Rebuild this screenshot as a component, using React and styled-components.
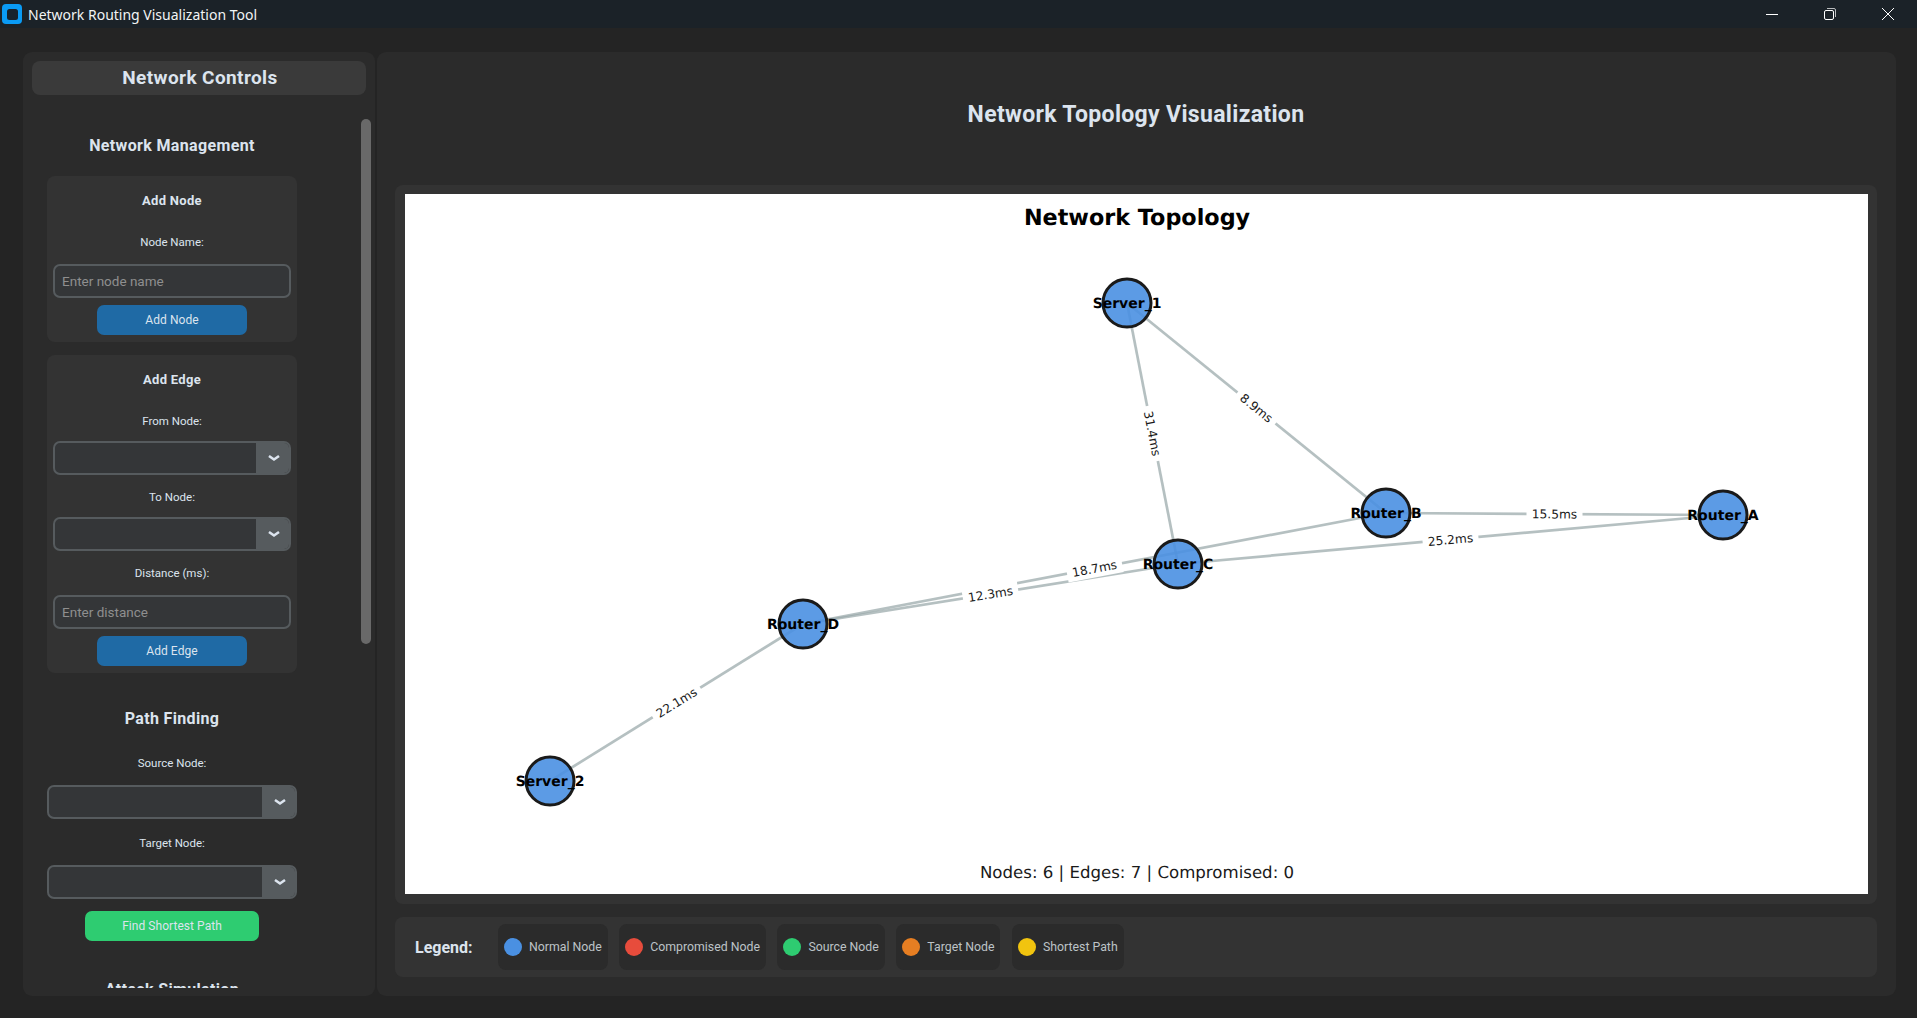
import React from 'react'
import styled, { createGlobalStyle } from 'styled-components'

const GlobalStyle = createGlobalStyle`
  html, body { margin: 0; padding: 0; background: #242424; }
  * { box-sizing: border-box; }
`

const Window = styled.div`
  width: 1917px;
  height: 1018px;
  display: flex;
  flex-direction: column;
  background: #242424;
  overflow: hidden;
  font-family: Roboto, "Liberation Sans", sans-serif;
`
const TitleBar = styled.div`
  height: 28px;
  flex: none;
  display: flex;
  align-items: center;
  background: #1b2228;
  color: #f2f4f5;
  font-family: "Noto Sans", sans-serif;
  font-size: 14px;
  padding-left: 2px;
`
const AppTitle = styled.span`
  margin-left: 6px;
`
const WindowButtons = styled.div`
  margin-left: auto;
  display: flex;
  align-items: center;
  gap: 46px;
  padding-right: 23px;
  svg { display: block; }
`
const Main = styled.div`
  flex: 1;
  min-height: 0;
  display: flex;
  gap: 2px;
  padding: 24px 21px 22px 23px;
`
const SidePanel = styled.aside`
  width: 352px;
  flex: none;
  display: flex;
  flex-direction: column;
  padding: 9px 9px 8px;
  background: #2b2b2b;
  border-radius: 9px;
`
const PanelHeader = styled.div`
  height: 34px;
  flex: none;
  display: flex;
  align-items: center;
  justify-content: center;
  padding: 0 0 2px 2px;
  background: #3a3a3a;
  border-radius: 8px;
  color: #dce4ee;
  font-size: 19px;
  font-weight: 700;
  letter-spacing: 0.4px;
`
const ScrollBody = styled.div`
  flex: 1;
  min-height: 0;
  display: flex;
  align-items: flex-start;
  margin-right: -5px;
  padding-left: 15px;
  overflow: hidden;
`
const ScrollContent = styled.div`
  width: 250px;
  flex: none;
  display: flex;
  flex-direction: column;
  padding-top: 39px;
`
const ScrollThumb = styled.div`
  width: 10px;
  height: 525px;
  margin-top: 24px;
  margin-left: auto;
  flex: none;
  background: #696969;
  border-radius: 5px;
`
const SectionTitle = styled.h2`
  margin: ${p => p.$top || 0}px 0 0;
  height: 24px;
  flex: none;
  line-height: 24px;
  text-align: center;
  color: #dce4ee;
  font-size: 16px;
  font-weight: 700;
  letter-spacing: 0.35px;
`
const Card = styled.div`
  margin-top: ${p => p.$top}px;
  display: flex;
  flex-direction: column;
  padding: 14px 6px 7px;
  background: #333333;
  border-radius: 8px;
`
const CardTitle = styled.h3`
  margin: 0;
  height: 21px;
  line-height: 22px;
  text-align: center;
  color: #dce4ee;
  font-size: 13px;
  font-weight: 700;
  letter-spacing: 0.3px;
`
const Label = styled.label`
  display: block;
  margin-top: ${p => p.$top ?? 14}px;
  margin-bottom: 12px;
  height: 16px;
  line-height: 16px;
  text-align: center;
  color: #dce4ee;
  font-size: 11.5px;
`
const TextInput = styled.input`
  display: block;
  width: 100%;
  height: 34px;
  margin-top: 2px;
  padding: 0 7px;
  background: #343638;
  border: 2px solid #565b5e;
  border-radius: 7px;
  color: #dce4ee;
  font-family: inherit;
  font-size: 13.5px;
  outline: none;
  &::placeholder { color: #8f8f8f; opacity: 1; }
`
const Select = styled.div`
  height: 34px;
  flex: none;
  margin-top: ${p => p.$top || 0}px;
  display: flex;
  background: #343638;
  border: 2px solid #565b5e;
  border-radius: 7px;
  overflow: hidden;
`
const SelectArrow = styled.div`
  width: 35px;
  margin-left: auto;
  margin-right: -2px;
  flex: none;
  display: flex;
  align-items: center;
  justify-content: center;
  background: #565b5e;
`
const ActionButton = styled.button`
  display: block;
  align-self: center;
  flex: none;
  width: ${p => p.$width}px;
  height: 30px;
  margin-top: ${p => p.$top}px;
  padding: 0;
  border: none;
  border-radius: 7px;
  background: ${p => p.$color};
  color: #dce4ee;
  font-family: inherit;
  font-size: 12px;
  letter-spacing: 0.05px;
`
const ContentPanel = styled.main`
  flex: 1;
  min-width: 0;
  display: flex;
  flex-direction: column;
  padding: 0 19px 19px 18px;
  background: #2b2b2b;
  border-radius: 9px;
`
const ContentTitle = styled.h1`
  height: 133px;
  flex: none;
  margin: 0;
  padding-bottom: 9px;
  display: flex;
  align-items: center;
  justify-content: center;
  color: #dce4ee;
  font-size: 23px;
  font-weight: 700;
  letter-spacing: 0.33px;
`
const ChartFrame = styled.section`
  height: 719px;
  flex: none;
  padding: 9px 9px 10px 10px;
  background: #333333;
  border-radius: 8px;
`
const Chart = styled.svg`
  display: block;
  width: 1463px;
  height: 700px;
  background: #ffffff;
  font-family: "DejaVu Sans", sans-serif;
  text-rendering: geometricPrecision;
`
const LegendBar = styled.section`
  height: 60px;
  flex: none;
  margin-top: 13px;
  display: flex;
  align-items: center;
  gap: 11.5px;
  padding-left: 20px;
  background: #333333;
  border-radius: 8px;
`
const LegendTitle = styled.span`
  margin-right: 14px;
  color: #dce4ee;
  font-size: 16px;
  font-weight: 700;
`
const LegendItem = styled.div`
  height: 46px;
  display: flex;
  align-items: center;
  gap: 7px;
  padding: 0 6px;
  background: #2b2b2b;
  border-radius: 8px;
  color: #bdc3c7;
  font-size: 12.3px;
`
const LegendDot = styled.span`
  width: 18px;
  height: 18px;
  border-radius: 50%;
  background: ${p => p.$color};
`

const AppIcon = () => (
  <svg width="20" height="20" viewBox="0 0 20 20">
    <rect width="20" height="20" rx="4" fill="#0a9bf5" />
    <rect x="5" y="5" width="11" height="11" rx="2.5" fill="#17222c" />
  </svg>
)

const Chevron = () => (
  <svg width="14" height="8" viewBox="0 0 14 8">
    <path d="M2 2 L7 5.5 L12 2" fill="none" stroke="#dce4ee" strokeWidth="2.6" />
  </svg>
)

const nodes = [
  { id: 'Server_1', x: 1127, y: 303 },
  { id: 'Router_B', x: 1386, y: 513 },
  { id: 'Router_C', x: 1178, y: 564 },
  { id: 'Router_A', x: 1723, y: 515 },
  { id: 'Router_D', x: 803, y: 624 },
  { id: 'Server_2', x: 550, y: 781 },
]

const edges = [
  ['Server_1', 'Router_B', '8.9ms'],
  ['Server_1', 'Router_C', '31.4ms'],
  ['Router_B', 'Router_A', '15.5ms'],
  ['Router_C', 'Router_A', '25.2ms'],
  ['Router_B', 'Router_D', '18.7ms'],
  ['Router_C', 'Router_D', '12.3ms'],
  ['Router_D', 'Server_2', '22.1ms'],
]

const ORIGIN_X = 405
const ORIGIN_Y = 194
const find = id => {
  const n = nodes.find(item => item.id === id)
  return { x: n.x - ORIGIN_X, y: n.y - ORIGIN_Y }
}

function Topology() {
  return (
    <Chart viewBox="0 0 1463 700">
      <text x="732" y="31" textAnchor="middle" fontSize="22.3" fontWeight="700" fill="#000">Network Topology</text>
      {edges.map(([a, b]) => {
        const p = find(a)
        const q = find(b)
        return <line key={a + b} x1={p.x} y1={p.y} x2={q.x} y2={q.y} stroke="#95a5a6" strokeOpacity="0.7" strokeWidth="2.7" />
      })}
      {edges.map(([a, b, label]) => {
        const p = find(a)
        const q = find(b)
        const mx = (p.x + q.x) / 2
        const my = (p.y + q.y) / 2
        let angle = Math.atan2(q.y - p.y, q.x - p.x) * 180 / Math.PI
        if (angle > 90) angle -= 180
        if (angle < -90) angle += 180
        const w = label.length === 6 ? 56 : 49
        return (
          <g key={label} transform={`translate(${mx} ${my}) rotate(${angle})`}>
            <rect x={-w / 2} y="-9" width={w} height="18" fill="#fff" />
            <text y="4.4" textAnchor="middle" fontSize="12.2" fill="#1a1a1a">{label}</text>
          </g>
        )
      })}
      {nodes.map(n => (
        <circle key={n.id} cx={n.x - ORIGIN_X} cy={n.y - ORIGIN_Y} r="24" fill="#4a90e2" fillOpacity="0.9" stroke="#1a1a1a" strokeWidth="3" />
      ))}
      {nodes.map(n => (
        <text key={n.id} x={n.x - ORIGIN_X} y={n.y - ORIGIN_Y + 4.5} textAnchor="middle" fontSize="14" fontWeight="700" fill="#000">{n.id}</text>
      ))}
      <text x="732" y="684" textAnchor="middle" fontSize="16.6" fill="#1a1a1a">Nodes: 6 | Edges: 7 | Compromised: 0</text>
    </Chart>
  )
}

const legend = [
  ['Normal Node', '#4a90e2'],
  ['Compromised Node', '#e74c3c'],
  ['Source Node', '#2ecc71'],
  ['Target Node', '#e67e22'],
  ['Shortest Path', '#f1c40f'],
]

function Dropdown({ top }) {
  return (
    <Select $top={top}>
      <SelectArrow><Chevron /></SelectArrow>
    </Select>
  )
}

export default function App() {
  return (
    <Window>
      <GlobalStyle />
      <TitleBar>
        <AppIcon />
        <AppTitle>Network Routing Visualization Tool</AppTitle>
        <WindowButtons>
          <svg width="12" height="12" viewBox="0 0 12 12"><path d="M0 6.5 H12" stroke="#fff" strokeWidth="1" /></svg>
          <svg width="12" height="12" viewBox="0 0 12 12" fill="none" stroke="#fff"><rect x="0.5" y="2.5" width="9" height="9" rx="1.5" /><path d="M3 0.5 H10 a1.5 1.5 0 0 1 1.5 1.5 V9" strokeOpacity="0.7" /></svg>
          <svg width="12" height="12" viewBox="0 0 12 12" stroke="#fff"><path d="M0 0 L12 12 M12 0 L0 12" /></svg>
        </WindowButtons>
      </TitleBar>
      <Main>
        <SidePanel>
          <PanelHeader>Network Controls</PanelHeader>
          <ScrollBody>
            <ScrollContent>
              <SectionTitle>Network Management</SectionTitle>
              <Card $top={18}>
                <CardTitle>Add Node</CardTitle>
                <Label $top={23}>Node Name:</Label>
                <TextInput placeholder="Enter node name" />
                <ActionButton $width={150} $top={7} $color="#1f6aa5">Add Node</ActionButton>
              </Card>
              <Card $top={13}>
                <CardTitle>Add Edge</CardTitle>
                <Label $top={23}>From Node:</Label>
                <Dropdown />
                <Label>To Node:</Label>
                <Dropdown />
                <Label>Distance (ms):</Label>
                <TextInput placeholder="Enter distance" />
                <ActionButton $width={150} $top={7} $color="#1f6aa5">Add Edge</ActionButton>
              </Card>
              <SectionTitle $top={34}>Path Finding</SectionTitle>
              <Label $top={24}>Source Node:</Label>
              <Dropdown top={2} />
              <Label $top={16}>Target Node:</Label>
              <Dropdown top={2} />
              <ActionButton $width={174} $top={12} $color="#2ecc71">Find Shortest Path</ActionButton>
              <SectionTitle $top={37}>Attack Simulation</SectionTitle>
            </ScrollContent>
            <ScrollThumb />
          </ScrollBody>
        </SidePanel>
        <ContentPanel>
          <ContentTitle>Network Topology Visualization</ContentTitle>
          <ChartFrame>
            <Topology />
          </ChartFrame>
          <LegendBar>
            <LegendTitle>Legend:</LegendTitle>
            {legend.map(([name, color]) => (
              <LegendItem key={name}>
                <LegendDot $color={color} />
                {name}
              </LegendItem>
            ))}
          </LegendBar>
        </ContentPanel>
      </Main>
    </Window>
  )
}
